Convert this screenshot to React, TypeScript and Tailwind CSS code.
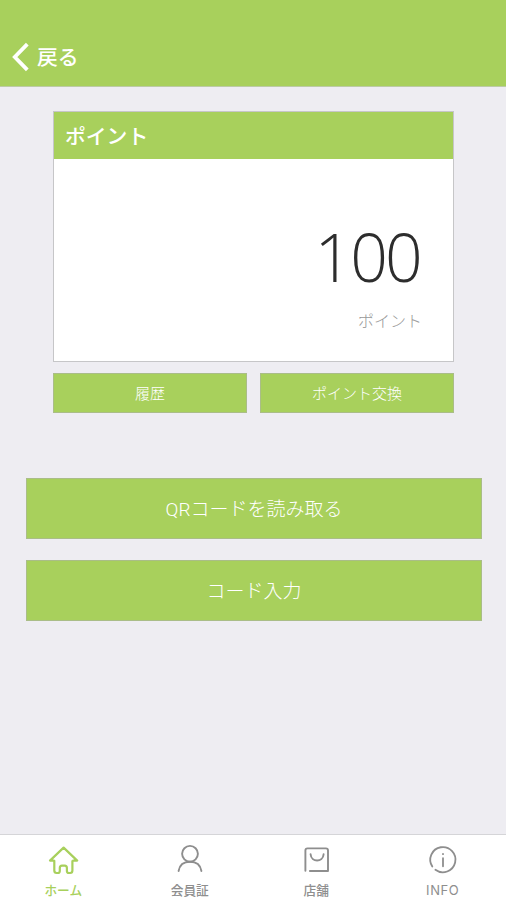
import React from 'react';

const HomeIcon = () => (
  <svg width="32" height="32" viewBox="0 0 32 32" fill="none" stroke="currentColor" strokeWidth="2.2" strokeLinecap="round" strokeLinejoin="round">
    <path d="M6.9 16.6 H3 L16.6 3.6 L30.2 16.6 H26.2 M7.3 16.8 V26.5 Q7.3 29 9.6 29 H10.8 Q12.8 29 12.8 27 V24 Q12.8 21.6 15 21.6 H17.7 Q19.9 21.6 19.9 24 V27 Q19.9 29 21.9 29 H23.2 Q25.4 29 25.4 26.5 V17" />
  </svg>
);

const MemberIcon = () => (
  <svg width="32" height="32" viewBox="0 0 32 32" fill="none" stroke="currentColor" strokeWidth="1.9" strokeLinecap="round">
    <ellipse cx="16" cy="9.8" rx="7.9" ry="7.9" />
    <path d="M4.6 27 C5.5 21.2 9.5 17.7 16 17.7 C22.5 17.7 26.5 21.2 27.4 27" />
  </svg>
);

const ShopIcon = () => (
  <svg width="32" height="32" viewBox="0 0 32 32" fill="none" stroke="currentColor" strokeWidth="1.9" strokeLinecap="round" strokeLinejoin="round">
    <path d="M5.4 26.8 V6.5 Q5.4 4.4 7.5 4.4 H25.9 Q28 4.4 28 6.5 V27 H9.9" />
    <path d="M10.6 10.3 C11.4 18.5 22.8 18.5 23.6 10.3" />
  </svg>
);

const InfoIcon = () => (
  <svg width="32" height="32" viewBox="0 0 32 32" fill="none" stroke="currentColor" strokeWidth="1.8" strokeLinecap="round">
    <path d="M5.3 22.5 A12.6 12.6 0 1 1 8.4 25.8" />
    <path d="M16 14.2 V22.3 M16 9.8 V10.2" />
  </svg>
);

const TabItem = ({
  label,
  icon: Icon,
  active = false,
  latin = false,
}: {
  label: string;
  icon: React.FC;
  active?: boolean;
  latin?: boolean;
}) => (
  <button className={`flex flex-1 flex-col items-center pt-[9px] ${active ? 'text-[#a8d05c]' : 'text-[#8e8e8e]'}`}>
    <Icon />
    <span
      className={`mt-[5px] leading-[18px] whitespace-nowrap ${
        latin ? 'font-[Inter,sans-serif] text-[13px] font-normal tracking-[0.6px]' : 'text-[12.7px] font-medium'
      }`}
    >
      {label}
    </span>
  </button>
);

const App: React.FC = () => {
  return (
    <div className="flex h-[900px] w-[506px] flex-col overflow-hidden bg-[#eeedf2] font-['Noto_Sans_CJK_JP',sans-serif]">
      {/* Header */}
      <header className="h-[87px] shrink-0 border-b border-[#bccba5] bg-[#a8d05c] pt-[41px] pl-[12px] text-white">
        <button className="flex h-8 items-center gap-[8px]">
          <svg width="17" height="30" viewBox="0 0 17 30" fill="none" stroke="currentColor" strokeWidth="3.8">
            <path d="M15.3 2.2 L2.8 15 L15.3 27.8" />
          </svg>
          <span className="pb-[2px] text-[20.8px] leading-[30px] font-medium">戻る</span>
        </button>
      </header>

      <main className="flex-1 pt-6">
        {/* Point balance */}
        <div className="mr-[52px] ml-[53px]">
          <section className="h-[251px] border border-[#c6c6c8] bg-white">
            <h1 className="h-[47px] bg-[#a8d05c] pl-[11px] text-[20.8px] leading-[47px] font-medium text-white">ポイント</h1>
            <div className="pr-[31px] text-right">
              <p className="mt-[52px] h-[90px] pr-[2px] font-['Open_Sans',sans-serif] text-[66px] leading-[90px] font-[330] tracking-[-2.8px] text-[#2d2d2d]">
                <span className="tracking-[-1.8px]">1</span>00
              </p>
              <p className="mt-[7px] text-[16px] leading-6 font-light text-[#999]">ポイント</p>
            </div>
          </section>
          <div className="mt-[11px] flex gap-[13px]">
            <button className="h-10 flex-1 border border-[#aabd88] bg-[#a8d05c] text-[15px] font-light text-white">履歴</button>
            <button className="h-10 flex-1 border border-[#aabd88] bg-[#a8d05c] text-[15px] font-light text-white">ポイント交換</button>
          </div>
        </div>

        {/* Code actions */}
        <div className="mt-[65px] mr-6 ml-[26px] flex flex-col gap-[21px]">
          <button className="h-[61px] border border-[#aabd88] bg-[#a8d05c] pt-[2px] text-[19px] font-light text-white">
            <span className="font-[Roboto,sans-serif]">QR</span>コードを読み取る
          </button>
          <button className="h-[61px] border border-[#aabd88] bg-[#a8d05c] text-[19px] font-light text-white">コード入力</button>
        </div>
      </main>

      {/* Tab bar */}
      <nav className="flex h-[66px] shrink-0 border-t border-[#d5d5d8] bg-white">
        <TabItem label="ホーム" icon={HomeIcon} active />
        <TabItem label="会員証" icon={MemberIcon} />
        <TabItem label="店舗" icon={ShopIcon} />
        <TabItem label="INFO" icon={InfoIcon} latin />
      </nav>
    </div>
  );
};

export default App;
